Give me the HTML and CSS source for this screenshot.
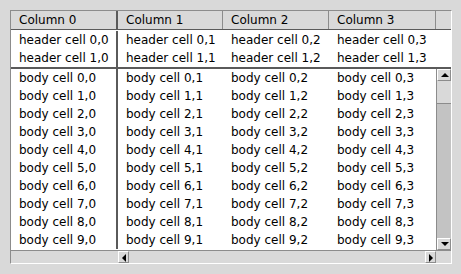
FILE: index.html
```html
<!doctype html>
<html lang="en">
  <head>
    <meta charset="UTF-8" />
    <title>Table</title>
    <link rel="stylesheet" href="styles.css">
  </head>
  <body>
    <div class="frame">
      <div class="row titles">
        <div class="cell c0">Column 0</div>
        <div class="cell c1">Column 1</div>
        <div class="cell c2">Column 2</div>
        <div class="cell c3">Column 3</div>
        <div class="cell filler"></div>
      </div>

      <div class="heads">
        <div class="row">
          <div class="cell c0">header cell 0,0</div>
          <div class="cell c1">header cell 0,1</div>
          <div class="cell c2">header cell 0,2</div>
          <div class="cell c3">header cell 0,3</div>
        </div>
        <div class="row">
          <div class="cell c0">header cell 1,0</div>
          <div class="cell c1">header cell 1,1</div>
          <div class="cell c2">header cell 1,2</div>
          <div class="cell c3">header cell 1,3</div>
        </div>
      </div>

      <div class="body">
        <div class="rows" id="rows"></div>
        <div class="vscroll">
          <div class="arrow up"></div>
          <div class="vthumb"></div>
          <div class="vtrough"></div>
          <div class="arrow down"></div>
        </div>
      </div>

      <div class="bottom">
        <div class="blank"></div>
        <div class="hscroll">
          <div class="arrow left"></div>
          <div class="hthumb"></div>
          <div class="arrow right"></div>
        </div>
        <div class="corner"></div>
      </div>
    </div>

    <script>
      const rows = document.getElementById("rows");
      for (let r = 0; r < 10; r++) {
        const row = document.createElement("div");
        row.className = "row";
        for (let c = 0; c < 4; c++) {
          const cell = document.createElement("div");
          cell.className = "cell c" + c;
          cell.textContent = `body cell ${r},${c}`;
          row.appendChild(cell);
        }
        rows.appendChild(row);
      }
    </script>
  </body>
</html>
```

FILE: styles.css
```css
body {
  margin: 0;
  background: #d9d9d9;
  font-family: "DejaVu Sans", sans-serif;
  font-size: 12px;
  color: #000;
}

.frame {
  margin: 10px 0 0 10px;
  width: 440px;
  height: 252px;
  border-top: 1px solid #8c8c8c;
  border-left: 1px solid #8c8c8c;
  border-right: 1px solid #ffffff;
  border-bottom: 1px solid #ffffff;
  display: flex;
  flex-direction: column;
  background: #fff;
}

.row {
  display: flex;
  height: 18px;
}

.cell {
  box-sizing: border-box;
  padding-left: 8px;
  line-height: 18px;
  white-space: nowrap;
  overflow: hidden;
}

.c0 {
  width: 107px;
  border-right: 2px solid #5a5a5a;
}

.c1 {
  width: 105px;
}

.c2 {
  width: 106px;
}

.c3 {
  width: 107px;
}

.titles {
  background: #d9d9d9;
  height: 19px;
  border-bottom: 1px solid #5a5a5a;
  box-sizing: border-box;
}

.titles .cell {
  line-height: 18px;
}

.titles .c1,
.titles .c2,
.titles .c3 {
  border-right: 1px solid #8c8c8c;
}

.titles .filler {
  flex: 1;
  padding: 0;
}

.heads {
  padding-top: 1px;
  border-bottom: 2px solid #5a5a5a;
}

.body {
  display: flex;
  height: 181px;
}

.rows {
  width: 425px;
}

.vscroll {
  width: 15px;
  display: flex;
  flex-direction: column;
  background: #c3c3c3;
  border-left: 1px solid #8c8c8c;
  box-sizing: border-box;
}

.vthumb {
  height: 22px;
  background: #d9d9d9;
  border-bottom: 1px solid #8c8c8c;
}

.vtrough {
  flex: 1;
}

.arrow {
  position: relative;
  background: #d9d9d9;
  box-sizing: border-box;
  border-top: 1px solid #ffffff;
  border-left: 1px solid #ffffff;
  border-right: 1px solid #8c8c8c;
  border-bottom: 1px solid #8c8c8c;
}

.arrow::after {
  content: "";
  position: absolute;
  width: 0;
  height: 0;
}

.up,
.down {
  height: 12px;
}

.up::after {
  left: 3px;
  top: 3px;
  border-left: 4px solid transparent;
  border-right: 4px solid transparent;
  border-bottom: 4px solid #000;
}

.down::after {
  left: 3px;
  top: 3px;
  border-left: 4px solid transparent;
  border-right: 4px solid transparent;
  border-top: 4px solid #000;
}

.bottom {
  display: flex;
  height: 15px;
  background: #d9d9d9;
  border-top: 1px solid #8c8c8c;
  box-sizing: border-box;
  flex: 1;
}

.blank {
  width: 107px;
}

.hscroll {
  width: 318px;
  display: flex;
  background: #d9d9d9;
}

.left,
.right {
  width: 11px;
}

.left::after {
  left: 3px;
  top: 2px;
  border-top: 4px solid transparent;
  border-bottom: 4px solid transparent;
  border-right: 4px solid #000;
}

.right::after {
  left: 3px;
  top: 2px;
  border-top: 4px solid transparent;
  border-bottom: 4px solid transparent;
  border-left: 4px solid #000;
}

.hthumb {
  flex: 1;
}

.corner {
  flex: 1;
}
```
